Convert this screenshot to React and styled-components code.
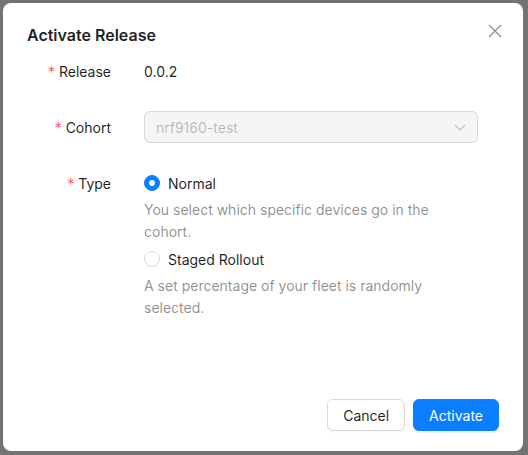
import React from "react";
import styled, { createGlobalStyle } from "styled-components";

const Global = createGlobalStyle`
  html, body { margin: 0; padding: 0; }
  body {
    background: #737373;
    font-family: Inter, "Noto Sans", sans-serif;
    -webkit-font-smoothing: antialiased;
  }
`;

const Backdrop = styled.div`
  width: 528px;
  height: 455px;
  padding: 3px 0 0 3px;
  box-sizing: border-box;
  overflow: hidden;
`;

const Modal = styled.div`
  width: 520px;
  height: 448px;
  box-sizing: border-box;
  background: #fff;
  border-radius: 8px;
  padding: 20px 24px 20px 24px;
  display: flex;
  flex-direction: column;
  position: relative;
  color: rgba(0, 0, 0, 0.88);
  font-size: 14px;
`;

const Title = styled.div`
  font-size: 16px;
  font-weight: 600;
  line-height: 24px;
  color: rgba(0, 0, 0, 0.88);
  margin-bottom: 8px;
`;

const Close = styled.button`
  position: absolute;
  top: 17px;
  right: 17px;
  width: 22px;
  height: 22px;
  border: 0;
  padding: 0;
  background: transparent;
  display: flex;
  align-items: center;
  justify-content: center;
  color: rgba(0, 0, 0, 0.45);
`;

const Form = styled.div`
  display: flex;
  flex-direction: column;
`;

const Row = styled.div`
  display: grid;
  grid-template-columns: 84px 334px;
  column-gap: 33px;
  margin-bottom: 24px;
`;

const Label = styled.div`
  height: 32px;
  display: flex;
  align-items: center;
  justify-content: flex-end;
  white-space: nowrap;
  color: rgba(0, 0, 0, 0.88);
`;

const Star = styled.span`
  color: #ff4d4f;
  margin-right: 4px;
  font-family: SimSun, "DejaVu Sans", sans-serif;
  font-size: 14px;
  line-height: 1;
`;

const Value = styled.div`
  height: 32px;
  display: flex;
  align-items: center;
`;

const Select = styled.div`
  height: 32px;
  box-sizing: border-box;
  border: 1px solid #d9d9d9;
  border-radius: 6px;
  background: #f5f5f5;
  display: flex;
  align-items: center;
  justify-content: space-between;
  padding: 0 11px;
  color: rgba(0, 0, 0, 0.25);
`;

const Options = styled.div`
  display: flex;
  flex-direction: column;
`;

const Option = styled.label`
  height: 32px;
  display: flex;
  align-items: center;
  gap: 8px;
`;

const Dot = styled.span`
  width: 16px;
  height: 16px;
  box-sizing: border-box;
  border-radius: 50%;
  flex: none;
  background: ${(p) => (p.$checked ? "#0b7dff" : "#fff")};
  border: 1px solid ${(p) => (p.$checked ? "#0b7dff" : "#d9d9d9")};
  display: flex;
  align-items: center;
  justify-content: center;
  &::after {
    content: "";
    width: 6px;
    height: 6px;
    border-radius: 50%;
    background: #fff;
    display: ${(p) => (p.$checked ? "block" : "none")};
  }
`;

const Help = styled.div`
  color: rgba(0, 0, 0, 0.45);
  line-height: 22px;
  max-width: 300px;
`;

const Footer = styled.div`
  margin-top: auto;
  display: flex;
  justify-content: flex-end;
  gap: 8px;
`;

const Button = styled.button`
  height: 32px;
  padding: 0 15px;
  border-radius: 6px;
  font-family: Inter, "Noto Sans", sans-serif;
  font-size: 14px;
  border: 1px solid ${(p) => (p.$primary ? "#0b7dff" : "#d9d9d9")};
  background: ${(p) => (p.$primary ? "#0b7dff" : "#fff")};
  color: ${(p) => (p.$primary ? "#fff" : "rgba(0,0,0,0.88)")};
  box-shadow: ${(p) =>
    p.$primary ? "0 2px 0 rgba(5,145,255,0.1)" : "0 2px 0 rgba(0,0,0,0.02)"};
`;

export default function App() {
  return (
    <>
      <Global />
      <Backdrop>
        <Modal>
          <Title>Activate Release</Title>
          <Close aria-label="close">
            <svg width="14" height="14" viewBox="0 0 14 14">
              <path d="M1 1L13 13M13 1L1 13" stroke="currentColor" strokeWidth="1.3" fill="none" />
            </svg>
          </Close>
          <Form>
            <Row>
              <Label><Star>*</Star>Release</Label>
              <Value>0.0.2</Value>
            </Row>
            <Row>
              <Label><Star>*</Star>Cohort</Label>
              <Select>
                <span>nrf9160-test</span>
                <svg width="12" height="12" viewBox="0 0 12 12">
                  <path d="M1 4L6 9L11 4" stroke="#bfbfbf" strokeWidth="1.1" fill="none" />
                </svg>
              </Select>
            </Row>
            <Row>
              <Label><Star>*</Star>Type</Label>
              <Options>
                <Option><Dot $checked />Normal</Option>
                <Help>You select which specific devices go in the cohort.</Help>
                <Option><Dot />Staged Rollout</Option>
                <Help>A set percentage of your fleet is randomly selected.</Help>
              </Options>
            </Row>
          </Form>
          <Footer>
            <Button>Cancel</Button>
            <Button $primary>Activate</Button>
          </Footer>
        </Modal>
      </Backdrop>
    </>
  );
}
